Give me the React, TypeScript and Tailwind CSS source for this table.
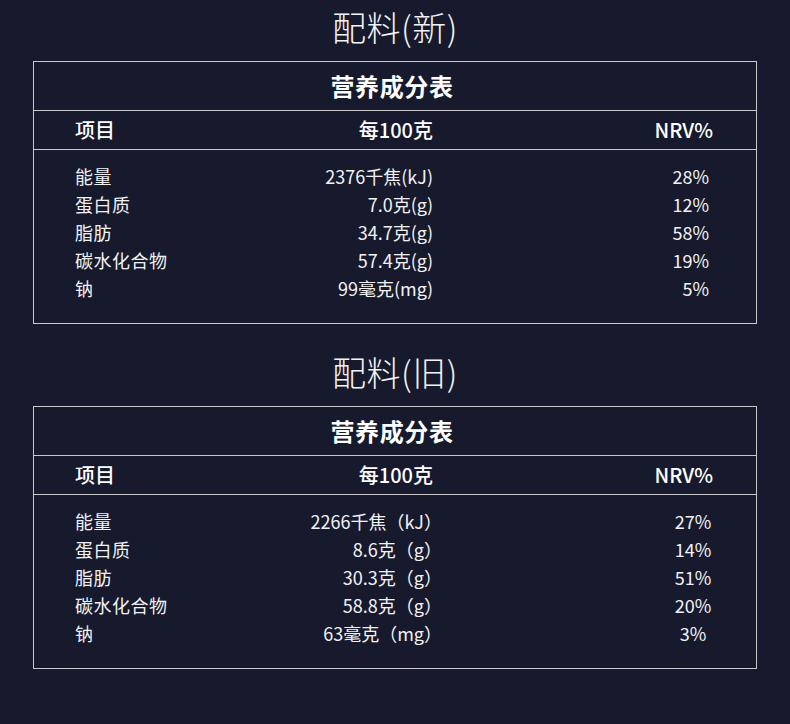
const rowsNew = [
  { name: '能量', value: '2376千焦(kJ)', nrv: '28%' },
  { name: '蛋白质', value: '7.0克(g)', nrv: '12%' },
  { name: '脂肪', value: '34.7克(g)', nrv: '58%' },
  { name: '碳水化合物', value: '57.4克(g)', nrv: '19%' },
  { name: '钠', value: '99毫克(mg)', nrv: '5%' }
];

const rowsOld = [
  { name: '能量', value: '2266千焦（kJ）', nrv: '27%' },
  { name: '蛋白质', value: '8.6克（g）', nrv: '14%' },
  { name: '脂肪', value: '30.3克（g）', nrv: '51%' },
  { name: '碳水化合物', value: '58.8克（g）', nrv: '20%' },
  { name: '钠', value: '63毫克（mg）', nrv: '3%' }
];

type Row = { name: string; value: string; nrv: string };

const NutritionTable = ({
  title,
  rows,
  fullWidth
}: {
  title: string;
  rows: Row[];
  fullWidth?: boolean;
}) => (
  <section>
    <h2 className="flex h-[54px] items-center justify-center text-[34px] font-light leading-none tracking-[0.5px] text-[#f4f4f6]">
      {title}
    </h2>
    <div className="mx-[33px] mt-[7px] border border-[#c9c9cc]">
      <div className="flex h-[48px] items-center justify-center pr-[6px] text-[24px] font-bold tracking-[0.6px] text-white">
        营养成分表
      </div>
      <div className="grid h-[40px] grid-cols-[178px_180px_1fr] items-center border-y border-[#c9c9cc] pl-[41px] pr-[43px] text-[20px] font-medium text-white">
        <span>项目</span>
        <span className="text-right">每100克</span>
        <span className="text-right">NRV%</span>
      </div>
      <div className="pt-[12px] pb-[21px] text-[18px] text-[#f2f2f4]">
        {rows.map((r) => (
          <div
            key={r.name}
            className="grid h-[28px] grid-cols-[178px_180px_1fr] items-center pl-[41px] pr-[47px] leading-none"
          >
            <span className="tracking-[0.5px]">{r.name}</span>
            {fullWidth ? (
              <span className="mr-[-9px] text-right">{r.value}</span>
            ) : (
              <span className="text-right">{r.value}</span>
            )}
            {fullWidth ? (
              <span className="flex justify-end">
                <span className="mr-[-11px] w-[54px] text-center">{r.nrv}</span>
              </span>
            ) : (
              <span className="text-right">{r.nrv}</span>
            )}
          </div>
        ))}
      </div>
    </div>
  </section>
);

export default function App() {
  return (
    <div
      className="min-h-[724px] w-[790px] bg-[#161a2c]"
      style={{ fontFamily: '"Noto Sans CJK SC", "Noto Sans", sans-serif' }}
    >
      <NutritionTable title="配料(新)" rows={rowsNew} />
      <div className="h-[21px]" />
      <NutritionTable title="配料(旧)" rows={rowsOld} fullWidth />
    </div>
  );
}
